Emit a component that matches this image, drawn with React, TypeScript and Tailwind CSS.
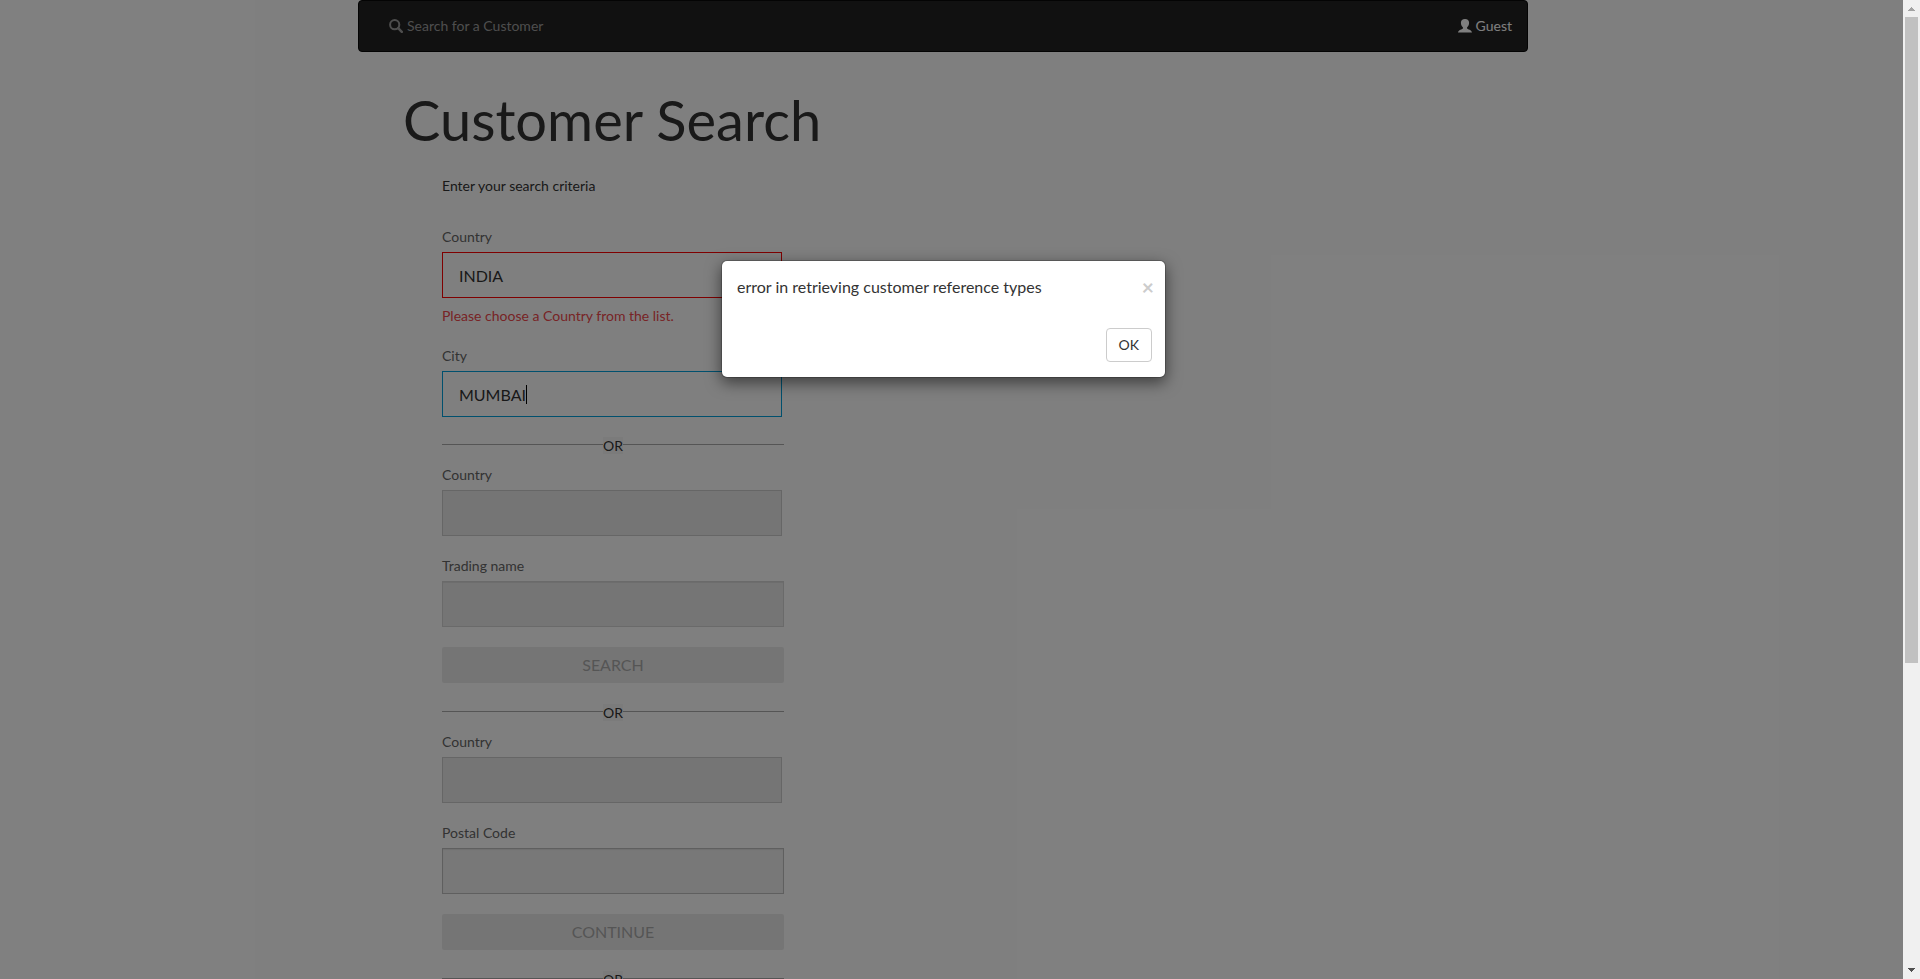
import { useState } from "react";
import type { InputHTMLAttributes, ReactNode } from "react";

type FieldProps = InputHTMLAttributes<HTMLInputElement> & {
  id: string;
  label: string;
  tone: string;
  wide?: boolean;
  caret?: boolean;
  error?: string;
};

function Field({ id, label, tone, wide, caret, error, ...rest }: FieldProps) {
  return (
    <div className="mb-5">
      <label htmlFor={id} className="mb-[5px] block text-[#666]">
        {label}
      </label>
      <div className={`relative ${wide ? "w-full" : "mr-0.5"}`}>
        <input
          id={id}
          type="text"
          className={`block h-[46px] w-full border px-4 text-base text-[#333] outline-none ${tone}`}
          {...rest}
        />
        {caret && <span className="absolute left-[84px] top-3.5 h-[19px] w-px bg-black" />}
      </div>
      {error && (
        <p role="alert" className="mt-2 text-[#f0484c]">
          {error}
        </p>
      )}
    </div>
  );
}

function OrDivider() {
  return (
    <div className="-mt-5 flex h-12 items-center pt-1.5">
      <div className="relative flex h-px w-full items-center justify-center bg-[#aaa]">
        <span className="mt-0.5 bg-[#f7f7f7] text-sm leading-[17px] text-[#333]">OR</span>
      </div>
    </div>
  );
}

function WideButton({ children }: { children: ReactNode }) {
  return (
    <button
      type="button"
      disabled
      className="mb-[21px] block h-9 w-full rounded-xs bg-[#ebebeb] text-base text-[#aaa]"
    >
      {children}
    </button>
  );
}

const disabledTone = "border-[#ccc] bg-[#ebebeb]";

export default function App() {
  const [country, setCountry] = useState("INDIA");
  const [city, setCity] = useState("MUMBAI");

  return (
    <div className="flex h-screen overflow-hidden bg-white font-[Lato,sans-serif] text-sm leading-5 text-[#333]">
      <div className="relative min-w-0 flex-1 overflow-hidden">
        <div className="pr-[17px]">
          <div className="mx-auto max-w-[1170px]">
            <nav className="flex h-[52px] items-center justify-between rounded border border-[#080808] bg-[#222] pl-[30px] pr-[15px]">
              <a href="#search" className="flex items-center gap-1 text-[#9d9d9d]">
                <svg viewBox="0 0 14 14" className="size-3.5" fill="none" stroke="currentColor">
                  <circle cx="5.7" cy="5.7" r="4.6" strokeWidth="2" />
                  <path d="M9.2 9.2l3.6 3.6" strokeWidth="2.5" strokeLinecap="round" />
                </svg>
                Search for a Customer
              </a>
              <a href="#guest" className="flex items-center gap-1 text-white">
                <svg viewBox="0 0 14 14" className="size-3.5" fill="currentColor">
                  <path d="M7 0C9.6 0 11.1 1.4 11.1 3.8C11.1 5.8 10.2 7.5 9.1 8.3V9.4C9.2 10.3 14 10.6 14 13.6H0C0 10.6 4.8 10.3 4.9 9.4V8.3C3.8 7.5 2.9 5.8 2.9 3.8C2.9 1.4 4.4 0 7 0Z" />
                </svg>
                Guest
              </a>
            </nav>
            <main className="px-[45px] pt-[37px]">
              <h1 className="text-[56px] leading-[62px]">Customer Search</h1>
              <form className="ml-[39px] mt-[25px] w-[342px]" onSubmit={(e) => e.preventDefault()}>
                <p className="mb-[31px]">Enter your search criteria</p>
                <Field
                  id="city-country"
                  label="Country"
                  tone="border-[#f00] bg-white"
                  value={country}
                  onChange={(e) => setCountry(e.target.value)}
                  error="Please choose a Country from the list."
                />
                <Field
                  id="city"
                  label="City"
                  tone="border-[#00a0dc] bg-white"
                  value={city}
                  onChange={(e) => setCity(e.target.value)}
                  caret
                />
                <OrDivider />
                <Field id="name-country" label="Country" tone={disabledTone} disabled />
                <Field
                  id="trading-name"
                  label="Trading name"
                  tone="border-[#d4d4d4] bg-[#ebebeb] shadow-[inset_0_1px_1px_rgba(0,0,0,0.075)]"
                  disabled
                  wide
                />
                <WideButton>SEARCH</WideButton>
                <OrDivider />
                <Field id="postal-country" label="Country" tone={disabledTone} disabled />
                <Field
                  id="postal-code"
                  label="Postal Code"
                  tone="border-[#bfbfbf] bg-[#f0f0f0] shadow-[inset_0_1px_1px_rgba(0,0,0,0.075)]"
                  disabled
                  wide
                />
                <WideButton>CONTINUE</WideButton>
                <OrDivider />
              </form>
            </main>
          </div>
        </div>

        <div className="absolute inset-0 flex items-start justify-center bg-black/50 pr-4 pt-[260px]">
          <div
            role="dialog"
            aria-modal="true"
            className="w-[445px] rounded-md border border-black/20 bg-white bg-clip-padding shadow-[0_5px_15px_rgba(0,0,0,0.5)]"
          >
            <div className="flex items-center justify-between pl-[15px] pr-[11px] pt-[15px]">
              <p className="text-base leading-[22px]">error in retrieving customer reference types</p>
              <button type="button" aria-label="Close" className="text-[21px] font-bold leading-[22px] text-[#ccc]">
                ×
              </button>
            </div>
            <div className="flex justify-end px-[13px] pb-[15px] pt-[30px]">
              <button type="button" className="h-[34px] rounded border border-[#ccc] bg-white px-3">
                OK
              </button>
            </div>
          </div>
        </div>
      </div>

      <div aria-hidden="true" className="flex w-[17px] shrink-0 flex-col bg-[#f0f0f0]">
        <svg viewBox="0 0 17 17" className="size-[17px]" fill="#a3a3a3" shapeRendering="crispEdges">
          <path d="M8 7h1v1h1v1h1v1h1v1H5v-1h1V9h1V8h1z" />
        </svg>
        <div className="mx-0.5 h-[66%] bg-[#c1c1c1]" />
        <svg viewBox="0 0 17 17" className="mt-auto size-[17px]" fill="#505050" shapeRendering="crispEdges">
          <path d="M5 6h7v1h-1v1h-1v1H9v1H8V9H7V8H6V7H5z" />
        </svg>
      </div>
    </div>
  );
}
